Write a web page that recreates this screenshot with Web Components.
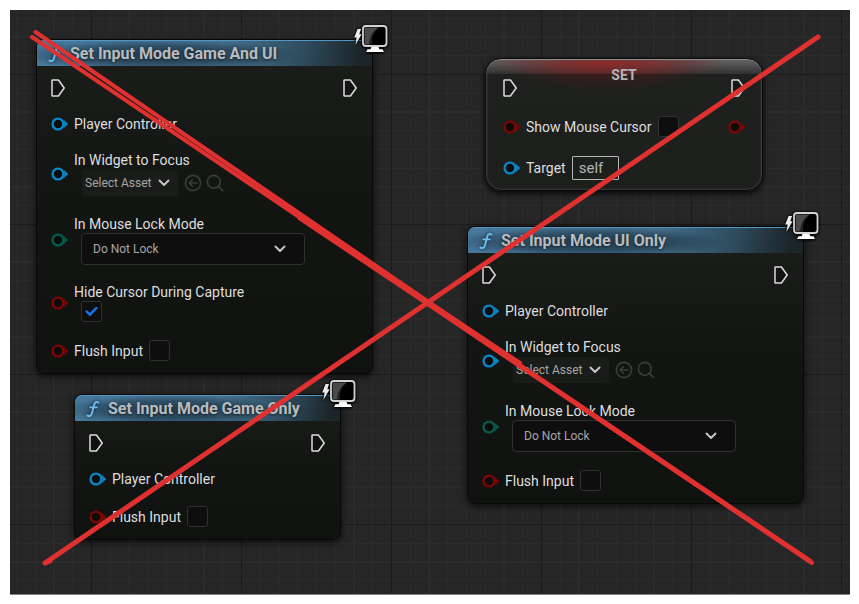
<!DOCTYPE html>
<html lang="en">
<head>
<meta charset="utf-8">
<title>Blueprint graph</title>
<style>
  body { margin: 0; background: #fff; font-family: Roboto, "Open Sans", sans-serif; }
</style>
</head>
<body>
<bp-graph>
  <bp-function-node heading="Set Input Mode Game And UI" style="left:26px;top:29px;width:337px">
    <bp-exec-row></bp-exec-row>
    <bp-pin label="Player Controller" color="#0a86c8"></bp-pin>
    <bp-pin label="In Widget to Focus" color="#0a86c8" control="asset"></bp-pin>
    <bp-pin label="In Mouse Lock Mode" color="#045c4e" control="select"></bp-pin>
    <bp-pin label="Hide Cursor During Capture" color="#7d0505" control="check" stacked checked></bp-pin>
    <bp-pin label="Flush Input" color="#7d0505" control="check"></bp-pin>
  </bp-function-node>
  <bp-function-node heading="Set Input Mode Game Only" style="left:64px;top:384px;width:267px">
    <bp-exec-row></bp-exec-row>
    <bp-pin label="Player Controller" color="#0a86c8"></bp-pin>
    <bp-pin label="Flush Input" color="#7d0505" control="check"></bp-pin>
  </bp-function-node>
  <bp-variable-node style="left:475px;top:48px;width:278px">
    <bp-exec-row heading="SET"></bp-exec-row>
    <bp-pin label="Show Mouse Cursor" color="#7d0505" control="check" output></bp-pin>
    <bp-pin label="Target" color="#0a86c8" control="text" value="self"></bp-pin>
  </bp-variable-node>
  <bp-function-node heading="Set Input Mode UI Only" style="left:457px;top:216px;width:337px">
    <bp-exec-row></bp-exec-row>
    <bp-pin label="Player Controller" color="#0a86c8"></bp-pin>
    <bp-pin label="In Widget to Focus" color="#0a86c8" control="asset"></bp-pin>
    <bp-pin label="In Mouse Lock Mode" color="#045c4e" control="select"></bp-pin>
    <bp-pin label="Flush Input" color="#7d0505" control="check"></bp-pin>
  </bp-function-node>
  <bp-strike slot="overlay"></bp-strike>
</bp-graph>

<script>
const define = (name, render, after) => customElements.define(name, class extends HTMLElement {
  connectedCallback() {
    if (this.shadowRoot) return;
    this.attachShadow({ mode: "open" }).innerHTML = render(this);
    if (after) after(this);
  }
});

define("bp-graph", () => `
  <style>
    :host {
      display: block; position: relative; overflow: hidden; box-sizing: border-box;
      margin: 10px 9px 0 10px; height: calc(100vh - 19px);
      border-bottom: 1px solid #858585;
      background-color: #262626;
      background-image:
        linear-gradient(90deg, #1b1b1b 0 1px, transparent 1px),
        linear-gradient(#1b1b1b 0 1px, transparent 1px),
        repeating-linear-gradient(90deg, #2b2b2b 0 1px, transparent 1px 12.5%),
        repeating-linear-gradient(#2b2b2b 0 1px, transparent 1px 12.5%);
      background-size: 150px 150px;
      background-position: 81px 64px;
    }
    ::slotted(:not(bp-strike)) { position: absolute; }
  </style>
  <slot></slot><slot name="overlay"></slot>`);

define("bp-function-node", el => `
  <style>
    :host {
      display: block; box-sizing: border-box; border: 1px solid #080808; border-radius: 8px;
      background: linear-gradient(#1c1e1c, #121512 45%, #0f120f);
      box-shadow: 0 2px 6px 1px rgba(0,0,0,.6);
    }
    header {
      display: flex; align-items: center; gap: 7px; height: 26px; padding: 0 10px; box-sizing: border-box;
      border-radius: 7px 7px 0 0; border-top: 1px solid #5597c3;
      background:
        radial-gradient(ellipse 42% 60% at 36% 56%, rgba(24,42,56,.75), rgba(24,42,56,.5) 60%, transparent),
        linear-gradient(100deg, #47799c 0%, #44718f 55%, #2f4e60 78%, #1c2529 96%);
    }
    h2 { margin: 0; font-size: 16px; line-height: 24px; font-weight: 700; color: #b9bcbe; white-space: nowrap; text-shadow: 0 1px 3px rgba(0,0,0,.55); }
    .f { flex: none; width: 16px; height: 18px; filter: drop-shadow(0 0 2px #12222e); }
    .body { display: flex; flex-direction: column; gap: 18px; padding: 13px 15px 12px 14px; }
    .client { position: absolute; right: -16px; top: -17px; width: 36px; height: 32px; filter: drop-shadow(0 0 1px #000) drop-shadow(0 1px 1px #000); }
  </style>
  <header>
    <svg class="f" viewBox="0 0 16 18" fill="none" stroke="#6bbcf2" stroke-linecap="round">
      <path d="M13.4 2.6C12 1.4 10 1.8 9.3 4.4L7 13.2C6.3 15.8 4.5 16.7 2.4 15.6" stroke-width="1.9"/>
      <path d="M5.2 7.4H12" stroke-width="1.6"/>
    </svg>
    <h2>${el.getAttribute("heading")}</h2>
  </header>
  <div class="body"><slot></slot></div>
  <svg class="client" viewBox="0 0 36 32">
    <path d="M5.6 6H9L7.3 11.2H9.6L3.4 22L4.6 14.4H2.2Z" fill="#ececec"/>
    <rect x="11" y="3" width="23.5" height="20" rx="3" fill="#000" stroke="#d2d2d2" stroke-width="1.8"/>
    <path d="M12.6 4.6H27C21 8 17.5 14 17.6 21.4H12.6Z" fill="#4b4b4b"/>
    <path d="M27 4.6C22 9 19.4 14 20.3 21.4H17.6C17.5 14 21 8 27 4.6Z" fill="#222"/>
    <path d="M19.5 24H26.5L27.5 26.2H30.5L32 29H14L15.5 26.2H18.5Z" fill="#fff"/>
  </svg>`);

define("bp-variable-node", () => `
  <style>
    :host {
      display: block; box-sizing: border-box; border: 1px solid #0a0a0a; border-radius: 16px;
      background:
        radial-gradient(ellipse 120px 24px at 44% 0, rgba(160,40,40,.8), rgba(130,35,35,.35) 60%, transparent) 0 0 / 100% 15px no-repeat,
        radial-gradient(ellipse 110px 32px at 44% 0, rgba(110,20,20,.6), transparent) no-repeat,
        linear-gradient(#686868, #303030) 0 0 / 100% 15px no-repeat,
        linear-gradient(#1f211f, #1d1f1d);
      box-shadow: inset 0 1px 1px #969696, inset 0 0 2px 1px #3c3c3c, 0 2px 5px 1px rgba(0,0,0,.7);
    }
    .body { display: flex; flex-direction: column; gap: 19px; padding: 7px 17px 10px 17px; }
  </style>
  <div class="body"><slot></slot></div>`);

const execPin = `<svg viewBox="0 0 14 18" fill="rgba(0,0,0,.25)" stroke="#dcdcdc" stroke-width="1.5" stroke-linejoin="round"><path d="M1 1.5Q1 1 1.5 1H7.4L13.2 9L7.4 17H1.5Q1 17 1 16.5Z"/></svg>`;

define("bp-exec-row", el => `
  <style>
    :host { display: flex; justify-content: space-between; align-items: flex-end; }
    svg { display: block; width: 14px; height: 18px; }
    h2 { margin: 0 0 13px; font-size: 14px; line-height: 18px; font-weight: 700; color: #b4b4b4; }
  </style>
  ${execPin}${el.hasAttribute("heading") ? `<h2>${el.getAttribute("heading")}</h2>` : ""}${execPin}`);

const dataPin = `<svg class="pin" viewBox="0 0 17 14"><circle cx="7" cy="7" r="5.4" fill="#0a0c0a" stroke="var(--pin)" stroke-width="2.4"/><path d="M13 3.4L17 7L13 10.6Q14.4 7 13 3.4Z" fill="var(--pin)" stroke="var(--pin)" stroke-width=".6"/></svg>`;
const chevron = `<svg class="chevron" viewBox="0 0 12 8" fill="none" stroke="#c4c4c4" stroke-width="2" stroke-linecap="round" stroke-linejoin="round"><path d="M1.5 1.5L6 6L10.5 1.5"/></svg>`;

const controls = {
  check: el => `<input id="control" type="checkbox" ${el.hasAttribute("checked") ? "checked" : ""}>`,
  text: el => `<input id="control" type="text" value="${el.getAttribute("value")}">`,
  select: () => `<span class="drop mode"><select id="control"><option>Do Not Lock</option></select>${chevron}</span>`,
  asset: () => `<span class="asset"><span class="drop pick"><select id="control"><option>Select Asset</option></select>${chevron}</span>
    <button type="button" aria-label="Use selected asset"><svg viewBox="0 0 18 18"><circle cx="9" cy="9" r="7.6"/><path d="M13 9H5.4M8.4 5.8L5.2 9L8.4 12.2"/></svg></button>
    <button type="button" aria-label="Browse to asset"><svg viewBox="0 0 18 18"><circle cx="7.8" cy="7.8" r="6.4"/><path d="M12.6 12.6L16.8 16.8"/></svg></button></span>`
};

define("bp-pin", el => {
  const kind = el.getAttribute("control");
  const stacked = kind === "asset" || kind === "select" || el.hasAttribute("stacked");
  return `
  <style>
    :host { display: flex; align-items: center; gap: 6px; --pin: ${el.getAttribute("color")}; }
    .pin { flex: none; display: block; width: 17px; height: 14px; }
    .field { display: flex; align-items: center; gap: 6px; flex: 1; }
    .field.stacked { flex-direction: column; align-items: flex-start; gap: 0; }
    .stacked > :not(label) { margin-left: 7px; }
    label { font-size: 14px; line-height: 18px; color: #dedede; white-space: nowrap; }
    input, select, button { margin: 0; font-family: inherit; box-sizing: border-box; }
    input[type=checkbox] { appearance: none; width: 21px; height: 21px; border: 1px solid #303130; border-radius: 3px; background: #0e0e0e; display: grid; place-items: center; }
    input[type=checkbox]:checked::before { content: ""; width: 13px; height: 10px; background: #1273e6; clip-path: polygon(0 50%, 14% 34%, 36% 62%, 86% 0, 100% 14%, 38% 100%); }
    input[type=text] { width: 47px; height: 24px; padding: 0 6px; border: 1px solid #b4b4b4; border-radius: 1px; background: transparent; color: #b4b4b4; font-size: 15px; }
    .drop { display: grid; align-items: center; }
    .drop > * { grid-area: 1 / 1; }
    .chevron { justify-self: end; width: 12px; height: 8px; pointer-events: none; }
    select { appearance: none; width: 100%; height: 100%; border: 0; border-radius: 4px; color: #a6a6a6; font-size: 12px; }
    .mode { width: 224px; height: 32px; }
    .mode select { background: #0e0e0e; border: 1px solid #2f312f; padding: 0 11px; }
    .mode .chevron { margin-right: 19px; }
    .asset { display: flex; align-items: center; gap: 4px; padding: 1px 0 1px 1px; }
    .pick { width: 96px; height: 26px; margin-right: 2px; }
    .pick select { background: #1a1c1a; padding: 0 3px; }
    .pick .chevron { margin-right: 8px; }
    button { width: 18px; height: 18px; padding: 0; border: 0; background: none; }
    button svg { display: block; width: 18px; height: 18px; fill: none; stroke: #3b3d3b; stroke-width: 1.6; stroke-linecap: round; stroke-linejoin: round; }
  </style>
  ${dataPin}
  <div class="field ${stacked ? "stacked" : ""}">${kind ? `<label for="control">${el.getAttribute("label")}</label>${controls[kind](el)}` : `<label>${el.getAttribute("label")}</label>`}</div>
  ${el.hasAttribute("output") ? dataPin : ""}`;
});

define("bp-strike", () => `
  <style>
    :host { position: absolute; inset: 0; pointer-events: none; }
    svg { display: block; width: 840px; height: 584px; fill: none; stroke: #e03131; stroke-linecap: round; stroke-linejoin: round; }
  </style>
  <svg viewBox="10 10 840 584" aria-hidden="true">
    <path d="M35.5 32L430 303L520 363" stroke-width="4"/>
    <path d="M32 37L812 563" stroke-width="4"/>
    <path d="M300 218L430 305L810 561" stroke-width="5"/>
    <path d="M818 37L45 563L50 561" stroke-width="5"/>
  </svg>`);
</script>
</body>
</html>
